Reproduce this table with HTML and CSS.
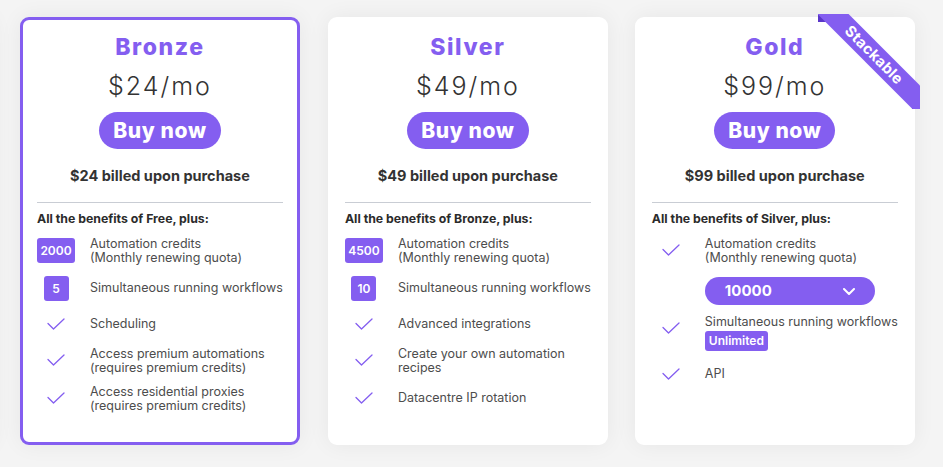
FILE: index.html
```html
<!DOCTYPE html>
<html lang="en">
<head>
<meta charset="utf-8">
<title>Pricing</title>
<link rel="stylesheet" href="styles.css">
</head>
<body>
<div class="plans">
  <div class="edge-card" aria-hidden="true"></div>

  <div class="card selected">
    <h2 class="plan-name">Bronze</h2>
    <div class="price">$24/mo</div>
    <button class="buy">Buy now</button>
    <div class="billed">$24 billed upon purchase</div>
    <hr class="divider">
    <div class="benefits-head">All the benefits of Free, plus:</div>
    <ul class="features">
      <li class="feature">
        <span class="icon"><span class="badge">2000</span></span>
        <span class="text"><span class="line">Automation credits</span><span class="line">(Monthly renewing quota)</span></span>
      </li>
      <li class="feature">
        <span class="icon"><span class="badge square">5</span></span>
        <span class="text"><span class="line">Simultaneous running workflows</span></span>
      </li>
      <li class="feature">
        <span class="icon"><svg class="check" viewBox="0 0 18 12"><polyline points="1,5.5 6.5,11 17,1"/></svg></span>
        <span class="text"><span class="line">Scheduling</span></span>
      </li>
      <li class="feature">
        <span class="icon"><svg class="check" viewBox="0 0 18 12"><polyline points="1,5.5 6.5,11 17,1"/></svg></span>
        <span class="text"><span class="line">Access premium automations</span><span class="line">(requires premium credits)</span></span>
      </li>
      <li class="feature">
        <span class="icon"><svg class="check" viewBox="0 0 18 12"><polyline points="1,5.5 6.5,11 17,1"/></svg></span>
        <span class="text"><span class="line">Access residential proxies</span><span class="line">(requires premium credits)</span></span>
      </li>
    </ul>
  </div>

  <div class="card">
    <h2 class="plan-name">Silver</h2>
    <div class="price">$49/mo</div>
    <button class="buy">Buy now</button>
    <div class="billed">$49 billed upon purchase</div>
    <hr class="divider">
    <div class="benefits-head">All the benefits of Bronze, plus:</div>
    <ul class="features">
      <li class="feature">
        <span class="icon"><span class="badge">4500</span></span>
        <span class="text"><span class="line">Automation credits</span><span class="line">(Monthly renewing quota)</span></span>
      </li>
      <li class="feature">
        <span class="icon"><span class="badge square">10</span></span>
        <span class="text"><span class="line">Simultaneous running workflows</span></span>
      </li>
      <li class="feature">
        <span class="icon"><svg class="check" viewBox="0 0 18 12"><polyline points="1,5.5 6.5,11 17,1"/></svg></span>
        <span class="text"><span class="line">Advanced integrations</span></span>
      </li>
      <li class="feature">
        <span class="icon"><svg class="check" viewBox="0 0 18 12"><polyline points="1,5.5 6.5,11 17,1"/></svg></span>
        <span class="text"><span class="line">Create your own automation</span><span class="line">recipes</span></span>
      </li>
      <li class="feature">
        <span class="icon"><svg class="check" viewBox="0 0 18 12"><polyline points="1,5.5 6.5,11 17,1"/></svg></span>
        <span class="text"><span class="line">Datacentre IP rotation</span></span>
      </li>
    </ul>
  </div>

  <div class="card has-ribbon">
    <div class="ribbon"><span class="ribbon-band">Stackable</span></div>
    <h2 class="plan-name">Gold</h2>
    <div class="price">$99/mo</div>
    <button class="buy">Buy now</button>
    <div class="billed">$99 billed upon purchase</div>
    <hr class="divider">
    <div class="benefits-head">All the benefits of Silver, plus:</div>
    <ul class="features">
      <li class="feature">
        <span class="icon"><svg class="check" viewBox="0 0 18 12"><polyline points="1,5.5 6.5,11 17,1"/></svg></span>
        <span class="text">
          <span class="line">Automation credits</span><span class="line">(Monthly renewing quota)</span>
          <span class="select">10000<svg class="chev" viewBox="0 0 12 7"><polyline points="1,1 6,6 11,1"/></svg></span>
        </span>
      </li>
      <li class="feature">
        <span class="icon"><svg class="check" viewBox="0 0 18 12"><polyline points="1,5.5 6.5,11 17,1"/></svg></span>
        <span class="text"><span class="line">Simultaneous running workflows</span><span class="tag">Unlimited</span></span>
      </li>
      <li class="feature">
        <span class="icon"><svg class="check" viewBox="0 0 18 12"><polyline points="1,5.5 6.5,11 17,1"/></svg></span>
        <span class="text"><span class="line">API</span></span>
      </li>
    </ul>
  </div>
</div>
</body>
</html>
```

FILE: styles.css
```css
* { box-sizing: border-box; }

html, body {
  margin: 0;
  padding: 0;
}

body {
  background: #f4f4f4;
  font-family: Inter, "Open Sans", Arial, sans-serif;
  color: #333;
  width: 943px;
  height: 467px;
  overflow: hidden;
}

.plans {
  display: flex;
  align-items: flex-start;
  gap: 28px;
  padding-top: 17px;
  margin-left: -288px;
}

.edge-card {
  flex: 0 0 280px;
  height: 428px;
  background: #fff;
  border-radius: 9px;
  box-shadow: 0 0 22px rgba(0, 0, 0, 0.07);
}

.card {
  position: relative;
  flex: 0 0 279px;
  height: 428px;
  background: #fff;
  border: 3px solid #fff;
  border-radius: 9px;
  padding: 12px 14px 0;
  box-shadow: 0 0 22px rgba(0, 0, 0, 0.06);
  display: flex;
  flex-direction: column;
  align-items: center;
}

.card.selected {
  border-color: #845ef0;
}

.has-ribbon {
  margin-left: -1px;
}

.plan-name {
  margin: 0;
  font-size: 23px;
  line-height: 30px;
  font-weight: 800;
  color: #845ef0;
  letter-spacing: 1.6px;
}

.price {
  margin-top: 6px;
  font-size: 25px;
  line-height: 36px;
  font-weight: 300;
  color: #333;
  letter-spacing: 2px;
}

.buy {
  margin-top: 8px;
  height: 37px;
  padding: 0 14px;
  border: 0;
  border-radius: 19px;
  background: #845ef0;
  color: #fff;
  font-family: inherit;
  font-size: 21px;
  font-weight: 800;
  letter-spacing: 0.6px;
  cursor: pointer;
}

.billed {
  margin-top: 17px;
  font-size: 14.5px;
  line-height: 20px;
  font-weight: 700;
  color: #333;
}

.divider {
  align-self: stretch;
  margin: 16px 0 0;
  border: 0;
  height: 1px;
  background: #c9cdd4;
}

.benefits-head {
  align-self: stretch;
  margin-top: 7px;
  font-size: 12.3px;
  line-height: 18px;
  font-weight: 700;
  color: #2b2b2b;
}

.features {
  align-self: stretch;
  list-style: none;
  margin: 9px 0 0;
  padding: 0;
  display: flex;
  flex-direction: column;
  gap: 10px;
}

.feature {
  display: grid;
  grid-template-columns: 38px 1fr;
  column-gap: 15px;
  align-items: start;
}

.icon {
  height: 26px;
  display: flex;
  align-items: center;
  justify-content: center;
}

.badge {
  height: 25px;
  min-width: 25px;
  padding: 0 4px;
  border-radius: 3px;
  background: #845ef0;
  color: #fff;
  font-size: 12px;
  font-weight: 600;
  display: flex;
  align-items: center;
  justify-content: center;
}

.badge.square {
  width: 25px;
  padding: 0;
}

.check {
  width: 18px;
  height: 12px;
  fill: none;
  stroke: #845ef0;
  stroke-width: 1.3;
  stroke-linecap: round;
  stroke-linejoin: round;
}

.text {
  min-height: 26px;
  display: flex;
  flex-direction: column;
  justify-content: center;
  font-size: 12.5px;
  line-height: 14px;
  font-weight: 400;
  color: #4d4d4d;
  white-space: nowrap;
}

.line { display: block; }

.select {
  margin-top: 12px;
  width: 170px;
  height: 28px;
  border-radius: 14px;
  background: #845ef0;
  color: #fff;
  font-size: 15px;
  font-weight: 700;
  display: flex;
  align-items: center;
  justify-content: space-between;
  padding: 0 20px;
}

.chev {
  width: 12px;
  height: 7px;
  fill: none;
  stroke: #fff;
  stroke-width: 2;
  stroke-linecap: round;
  stroke-linejoin: round;
}

.tag {
  align-self: flex-start;
  margin-top: 2px;
  height: 20px;
  padding: 0 4px;
  border-radius: 3px;
  background: #845ef0;
  color: #fff;
  font-size: 12px;
  font-weight: 600;
  display: flex;
  align-items: center;
}

.ribbon {
  position: absolute;
  top: -6px;
  right: -8px;
  width: 102px;
  height: 95px;
  overflow: hidden;
}

.ribbon::before,
.ribbon::after {
  content: "";
  position: absolute;
  width: 8px;
  height: 8px;
  background: #5a36c9;
}

.ribbon::before { top: 0; left: 0; }
.ribbon::after { bottom: 0; right: 0; }

.ribbon-band {
  position: absolute;
  z-index: 1;
  left: -24px;
  top: 30px;
  width: 160px;
  height: 22px;
  transform: rotate(45deg);
  background: #845ef0;
  color: #fff;
  font-size: 15px;
  font-weight: 700;
  line-height: 22px;
  text-align: center;
  letter-spacing: 0.3px;
}
```
